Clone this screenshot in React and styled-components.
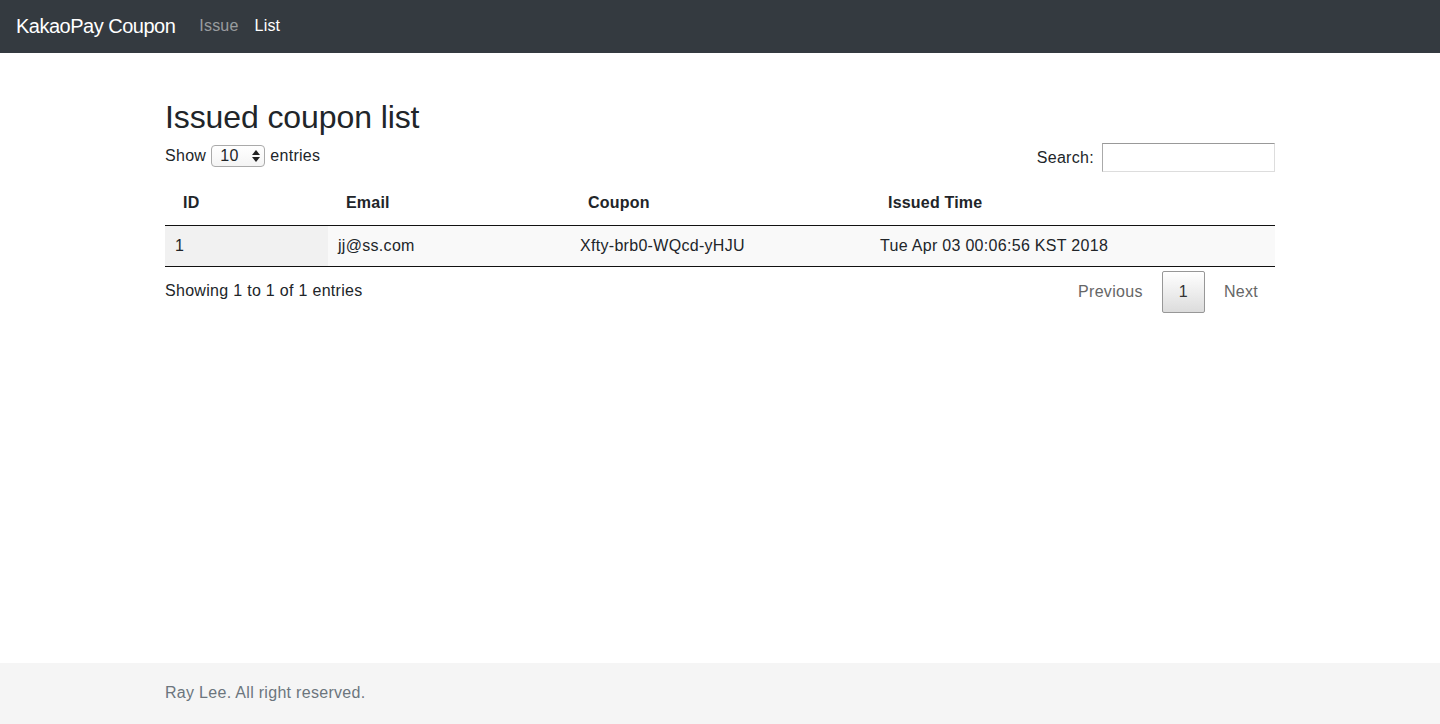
import styled, { createGlobalStyle } from 'styled-components';

const GlobalStyle = createGlobalStyle`
  html, body {
    margin: 0;
    padding: 0;
  }
  body {
    font-family: 'Liberation Sans', Arial, sans-serif;
    font-size: 16px;
    line-height: 1.5;
    color: #212529;
    background: #fff;
    letter-spacing: 0.3px;
  }
  * {
    box-sizing: border-box;
  }
`;

const Page = styled.div`
  min-height: 100vh;
  display: flex;
  flex-direction: column;
`;

const Navbar = styled.nav`
  height: 53px;
  background: #343a40;
  display: flex;
  align-items: center;
  padding: 0 16px 2px;
`;

const Brand = styled.a`
  font-size: 20px;
  color: #fff;
  text-decoration: none;
  margin-right: 16px;
  letter-spacing: -0.5px;
`;

const NavLink = styled.a`
  padding: 0 8px;
  color: ${(p) => (p.$active ? '#fff' : 'rgba(255, 255, 255, 0.5)')};
  text-decoration: none;
  font-size: 16px;
  letter-spacing: 0.2px;
`;

const Main = styled.main`
  flex: 1;
  width: 1110px;
  margin: 0 auto;
  padding-top: 45px;
`;

const Title = styled.h2`
  margin: 0 0 8px;
  font-size: 32px;
  font-weight: 500;
  line-height: 1.2;
  letter-spacing: -0.1px;
`;

const Toolbar = styled.div`
  display: flex;
  justify-content: space-between;
  align-items: flex-start;
  height: 37px;
`;

const Label = styled.label`
  display: flex;
  align-items: center;
  gap: 5px;
  margin-top: ${(p) => p.$top || 0}px;
`;

const SelectBox = styled.div`
  position: relative;
  width: 54px;
  height: 22px;
  border: 1px solid #aaa;
  border-radius: 4px;
  background: linear-gradient(#fff, #f4f4f4);
  padding-left: 8px;
  line-height: 20px;
  font-size: 16px;
`;

const Arrows = styled.svg`
  position: absolute;
  right: 4px;
  top: 4px;
`;

const SearchInput = styled.input`
  width: 173px;
  height: 29px;
  border: 1px solid #aaa;
  border-top-color: #999;
  border-bottom-color: #ddd;
  border-left-color: #aaa;
  border-right-color: #ddd;
  border-radius: 0;
  padding: 5px;
  background: transparent;
  margin-left: 3px;
`;

const Table = styled.table`
  width: 100%;
  border-collapse: collapse;
  table-layout: fixed;
`;

const Th = styled.th`
  width: ${(p) => p.$width}px;
  text-align: left;
  font-weight: bold;
  padding: 10px 18px;
  border-bottom: 1px solid #111;
  letter-spacing: 0.2px;
`;

const Tr = styled.tr`
  background: #f9f9f9;
`;

const Td = styled.td`
  padding: 8px 10px;
  border-bottom: 1px solid #111;
  background: ${(p) => (p.$sorted ? '#f1f1f1' : 'transparent')};
`;

const Bottom = styled.div`
  display: flex;
  justify-content: space-between;
  align-items: flex-start;
`;

const Info = styled.div`
  padding-top: 12px;
`;

const Pagination = styled.div`
  display: flex;
  padding-top: 4px;
`;

const PageButton = styled.a`
  display: block;
  padding: 8px 16px;
  margin-left: 2px;
  border: 1px solid ${(p) => (p.$current ? '#979797' : 'transparent')};
  border-radius: 2px;
  color: ${(p) => (p.$current ? '#333' : '#666')};
  background: ${(p) => (p.$current ? 'linear-gradient(to bottom, #fff 0%, #dcdcdc 100%)' : 'transparent')};
  text-decoration: none;
  cursor: default;
`;

const Footer = styled.footer`
  height: 61px;
  background: #f5f5f5;
`;

const FooterInner = styled.div`
  width: 1110px;
  margin: 0 auto;
  line-height: 60px;
  color: #6c757d;
`;

const rows = [
  { id: 1, email: 'jj@ss.com', coupon: 'Xfty-brb0-WQcd-yHJU', time: 'Tue Apr 03 00:06:56 KST 2018' },
];

export default function App() {
  return (
    <Page>
      <GlobalStyle />
      <Navbar>
        <Brand>KakaoPay Coupon</Brand>
        <NavLink>Issue</NavLink>
        <NavLink $active>List</NavLink>
      </Navbar>
      <Main>
        <Title>Issued coupon list</Title>
        <Toolbar>
          <Label>
            Show
            <SelectBox>
              10
              <Arrows width="8" height="12" viewBox="0 0 8 12">
                <path d="M4 0 L8 5 L0 5 Z" fill="#222" />
                <path d="M0 7 L8 7 L4 12 Z" fill="#222" />
              </Arrows>
            </SelectBox>
            entries
          </Label>
          <Label $top={-1}>
            Search:
            <SearchInput type="search" />
          </Label>
        </Toolbar>
        <Table>
          <thead>
            <tr>
              <Th $width={163}>ID</Th>
              <Th $width={242}>Email</Th>
              <Th $width={300}>Coupon</Th>
              <Th $width={405}>Issued Time</Th>
            </tr>
          </thead>
          <tbody>
            {rows.map((r) => (
              <Tr key={r.id}>
                <Td $sorted>{r.id}</Td>
                <Td>{r.email}</Td>
                <Td>{r.coupon}</Td>
                <Td>{r.time}</Td>
              </Tr>
            ))}
          </tbody>
        </Table>
        <Bottom>
          <Info>Showing 1 to 1 of 1 entries</Info>
          <Pagination>
            <PageButton>Previous</PageButton>
            <PageButton $current>1</PageButton>
            <PageButton>Next</PageButton>
          </Pagination>
        </Bottom>
      </Main>
      <Footer>
        <FooterInner>Ray Lee. All right reserved.</FooterInner>
      </Footer>
    </Page>
  );
}
